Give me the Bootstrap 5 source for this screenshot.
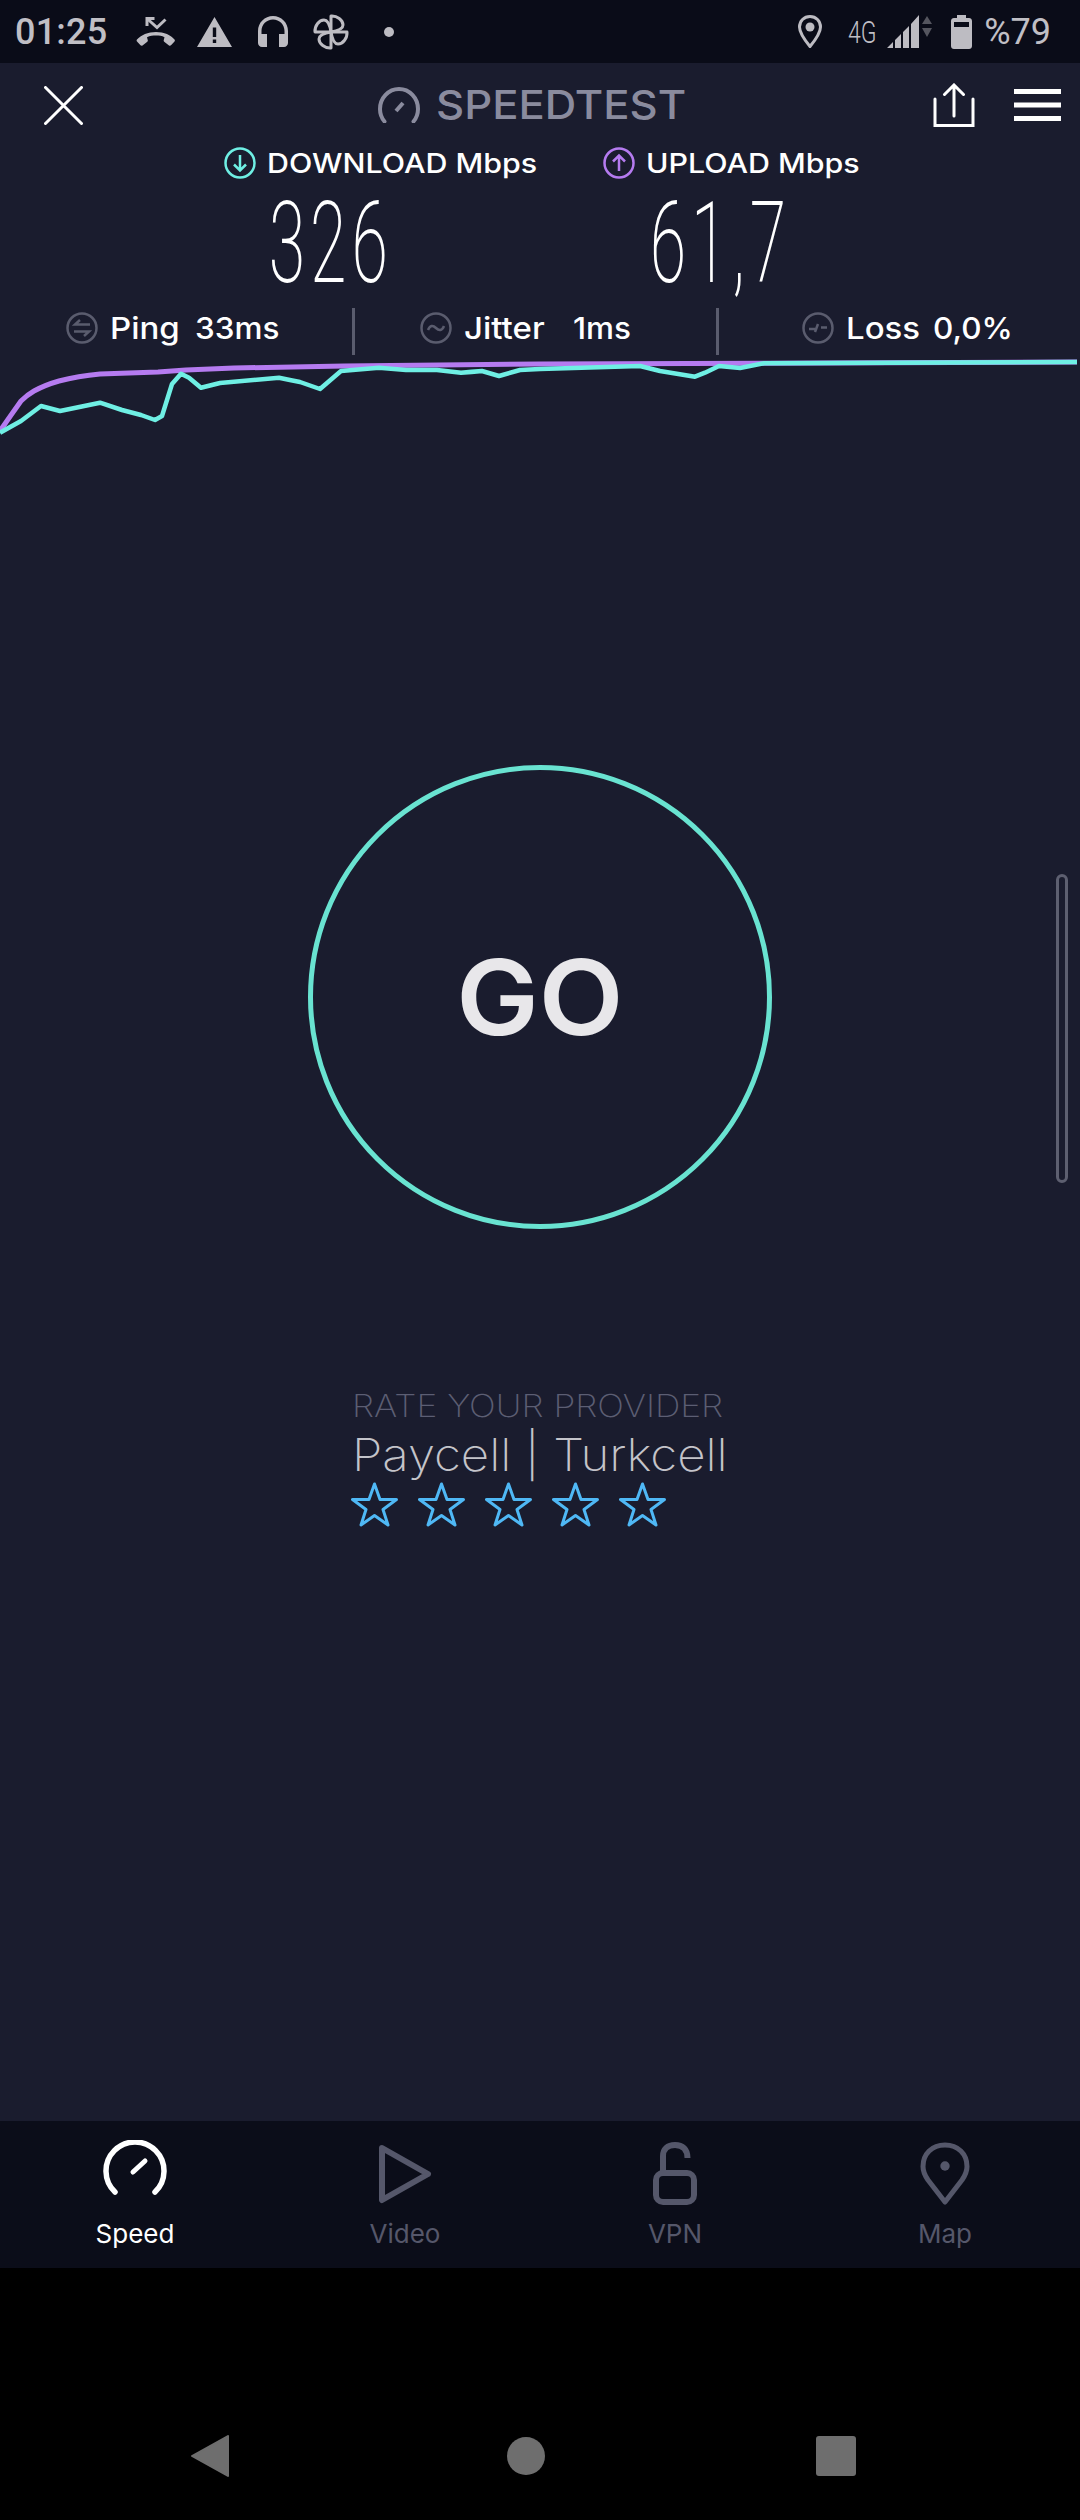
<!DOCTYPE html>
<html lang="en">
<head>
<meta charset="utf-8">
<title>Speedtest</title>
<link href="https://cdn.jsdelivr.net/npm/bootstrap@5.3.0/dist/css/bootstrap.min.css" rel="stylesheet">
<style>
html,body{margin:0;background:#000;}
body{font-family:Inter,"Liberation Sans",sans-serif;color:#fff;}
.phone{width:1080px;height:2520px;overflow:hidden;}
.statusbar{height:63px;background:#0a0c18;color:#c0bfc5;font-family:Roboto,sans-serif;font-size:36px;padding:0 29px 0 15px;}
.statusbar svg{display:block;fill:#bdbcc2;}
.st-time{font-weight:500;line-height:1;width:93px;letter-spacing:.2px;}
.st-4g{font-size:32px;font-weight:300;transform:scaleX(.72);transform-origin:left center;width:32px;line-height:1;}
.st-pct{line-height:1;font-weight:400;}
.appzone{background:#1a1c2e;height:2058px;position:relative;}
.stretched{display:inline-block;transform-origin:left center;}
.headrow{height:80px;padding:4px 19px 0 44px;}
.brand{color:#8a8b9e;font-size:40px;font-weight:500;line-height:1;white-space:nowrap;}
.brand .stretched{transform:scaleX(1.09);}
.speedlabels{padding-left:224px;height:39px;}
.speedlabels .lbl{font-size:27.5px;font-weight:500;line-height:1;padding-top:2px;white-space:nowrap;transform:scaleX(1.105);transform-origin:left center;}
.numrow{height:126px;padding-left:231px;padding-bottom:5px;}
.numval{width:180px;text-align:center;font-family:Roboto,sans-serif;font-weight:200;font-size:114px;line-height:1;letter-spacing:8.5px;transform:scaleX(.58);color:#fff;flex:none;}
.statrow{height:49px;}
.statcell{height:39px;font-size:30px;font-weight:500;line-height:1;white-space:nowrap;}
.stat-k{transform:scaleX(1.1);transform-origin:left center;}
.stat-v{transform:scaleX(1.05);transform-origin:left center;}
.sep{width:3px;height:47px;background:#5a5c6e;flex:none;}
.graphbox{display:block;height:86px;width:1080px;}
.gobox{margin-top:322px;}
.gocircle{width:464px;height:464px;border:5px solid #69e3d1;border-radius:50%;color:#e8e7ea;font-size:104px;font-weight:600;line-height:1;}
.goword{display:inline-block;transform:scaleX(1.06);}
.ratebox{margin-top:158px;padding-left:352px;}
.ratehead{font-size:31.5px;font-weight:200;color:#5c5e73;line-height:38px;white-space:nowrap;}
.ratehead .stretched{transform:scaleX(1.122);}
.ratename{font-size:44.5px;font-weight:200;color:#c4c4ca;line-height:54px;padding-top:3px;white-space:nowrap;}
.ratename .stretched{transform:scaleX(1.105);}
.starrow{gap:20px;margin-left:-1px;}
.scrolltrack{position:absolute;right:12px;top:811px;width:12px;height:309px;border:3px solid #5d5f70;border-radius:6px;}
.tabbar{height:147px;background:#0b0d19;}
.tabitem{width:270px;padding-top:17px;color:#55576a;font-size:26px;line-height:1;}
.tabitem.active{color:#fff;}
.tabicon{height:83px;}
.navbarea{height:252px;background:#000;padding-top:165px;}
</style>
</head>
<body>
<div class="phone d-flex flex-column">
  <div class="statusbar d-flex align-items-center">
    <div class="st-time">01:25</div>
    <svg style="margin-left:28px" width="40" height="30" viewBox="0 0 40 30"><path d="M20 15C12 15 5 18 1 22.500c-.6.700-.5 1.500 0 2l3.500 3.800c.6.600 1.400.700 2 .1l4.800-3.600c.5-.4.7-1 .5-1.600l-.8-3C14 19 17 18.600 20 18.600s6 .4 8.500 1.600l-.8 3c-.2.600 0 1.200.5 1.600l4.800 3.600c.6.600 1.400.5 2-.1l3.500-3.800c.5-.5.600-1.300 0-2C35 18 28 15 20 15z"/><path d="M11 1.500L21 10.500 29.500 2.500" fill="none" stroke="#bdbcc2" stroke-width="3"/><path d="M9.500 0h9v3h-6v6h-3z"/></svg>
    <svg style="margin-left:21px" width="35" height="30" viewBox="0 0 35 30"><path d="M17.500 0L35 30H0zM15.800 10.500v9.500h3.400v-9.500zM15.800 22.500v3.500h3.400v-3.500z" fill-rule="evenodd"/></svg>
    <svg style="margin-left:26px" width="30" height="31" viewBox="0 0 30 31"><path d="M15 0C6.700 0 0 6.700 0 15v12c0 2.200 1.800 4 4 4h5V18H3.500v-3C3.500 8.600 8.600 3.500 15 3.500S26.500 8.600 26.500 15v3H21v13h5c2.200 0 4-1.800 4-4V15C30 6.700 23.300 0 15 0z"/></svg>
    <svg style="margin-left:25px" width="36" height="36" viewBox="0 0 36 36"><g fill="none" stroke="#bdbcc2" stroke-width="3" stroke-linejoin="round"><path d="M18 18V2C24 1.500 30 6 30 11c0 4-6 6-12 7z"/><path d="M18 18H34C34.500 24 30 30 25 30c-4 0-6-6-7-12z"/><path d="M18 18V34C12 34.500 6 30 6 25c0-4 6-6 12-7z"/><path d="M18 18H2C1.500 12 6 6 11 6c4 0 6 6 7 12z"/></g></svg>
    <svg style="margin-left:35px" width="10" height="10" viewBox="0 0 10 10"><circle cx="5" cy="5" r="5"/></svg>
    <div class="ms-auto d-flex align-items-center">
      <svg width="24" height="33" viewBox="0 0 24 33"><path d="M12 1.500C6 1.500 1.500 6 1.500 12c0 6 6 14 10.500 19.500C16.500 26 22.500 18 22.500 12c0-6-4.500-10.500-10.500-10.500z" fill="none" stroke="#bdbcc2" stroke-width="3"/><circle cx="12" cy="12" r="4.500"/></svg>
      <div class="st-4g" style="margin-left:26px">4G</div>
      <svg style="margin-left:7px" width="46" height="33" viewBox="0 0 46 33"><path d="M0 33L6 27V33zM8 25L14 19V33H8zM16 17L22 11V33H16zM24 9L32 0V33H24z"/><path d="M35 9L40 1 45 9zM35 13H45L40 22z" fill="#55565f"/></svg>
      <svg style="margin-left:18px" width="21" height="34" viewBox="0 0 21 34"><path d="M6 0h9v3h3c1.700 0 3 1.300 3 3v25c0 1.700-1.300 3-3 3H3c-1.700 0-3-1.300-3-3V6c0-1.700 1.300-3 3-3h3z"/><rect x="3" y="7" width="15" height="5" fill="#0a0c18"/></svg>
      <div class="st-pct" style="margin-left:12px">%79</div>
    </div>
  </div>

  <div class="appzone">
    <div class="headrow d-flex align-items-center justify-content-between">
      <svg width="39" height="39" viewBox="0 0 39 39"><path d="M1.500 1.500L37.500 37.500M37.500 1.500L1.500 37.500" stroke="#fff" stroke-width="3" stroke-linecap="round"/></svg>
      <div class="brand d-flex align-items-center" style="margin-left:295px">
        <svg class="me-3" width="42" height="36" viewBox="0 0 42 36"><path d="M6.500 34.500C3.500 31 2 26.500 2 22 2 11 10.500 2 21 2s19 9 19 20c0 4.500-1.500 9-4.500 12.500" fill="none" stroke="#8a8b9e" stroke-width="4" stroke-linecap="round"/><path d="M18 24L25 16" stroke="#8a8b9e" stroke-width="4"/></svg>
        <span class="stretched">SPEEDTEST</span>
      </div>
      <div class="d-flex align-items-center ms-auto">
        <svg width="42" height="44" viewBox="0 0 42 44"><path d="M2 16V42.500H40V16M21 33V3M11.500 11.500L21 2l9.500 9.500" fill="none" stroke="#fff" stroke-width="3" stroke-linecap="round"/></svg>
        <svg style="margin-left:39px" width="47" height="32" viewBox="0 0 47 32"><path d="M0 0h47v5H0zM0 13.500h47v5H0zM0 27h47v5H0z" fill="#fff"/></svg>
      </div>
    </div>

    <div class="speedlabels d-flex align-items-center">
      <svg width="32" height="32" viewBox="0 0 32 32"><circle cx="16" cy="16" r="14.500" fill="none" stroke="#6fefe4" stroke-width="2.500"/><path d="M16 8V23M10 17.500L16 23.500l6-6" fill="none" stroke="#6fefe4" stroke-width="2.500"/></svg>
      <span class="lbl" style="margin-left:11px;width:269px">DOWNLOAD Mbps</span>
      <svg style="margin-left:67px" width="32" height="32" viewBox="0 0 32 32"><circle cx="16" cy="16" r="14.500" fill="none" stroke="#b57bf0" stroke-width="2.500"/><path d="M16 24V9M10 14.500L16 8.500l6 6" fill="none" stroke="#b57bf0" stroke-width="2.500"/></svg>
      <span class="lbl" style="margin-left:11px">UPLOAD Mbps</span>
    </div>

    <div class="numrow d-flex align-items-center">
      <div class="numval">326</div>
      <div class="numval" style="margin-left:201px">61,7</div>
    </div>

    <div class="statrow d-flex">
      <div class="statcell d-flex align-items-center" style="width:352px;padding-left:66px">
        <svg width="32" height="32" viewBox="0 0 32 32"><circle cx="16" cy="16" r="14.500" fill="none" stroke="#5a5c6e" stroke-width="2.500"/><path d="M24 12.500H9L14 8M8 19.500H23L18 24" fill="none" stroke="#5a5c6e" stroke-width="2.500"/></svg>
        <span class="stat-k" style="margin-left:12px;width:85px">Ping</span><span class="stat-v">33ms</span>
      </div>
      <div class="sep"></div>
      <div class="statcell d-flex align-items-center" style="width:361px;padding-left:65px">
        <svg width="32" height="32" viewBox="0 0 32 32"><circle cx="16" cy="16" r="14.500" fill="none" stroke="#5a5c6e" stroke-width="2.500"/><path d="M8 18c2-5 5-5 8-2s6 3 8-2" fill="none" stroke="#5a5c6e" stroke-width="2.500"/></svg>
        <span class="stat-k" style="margin-left:12px;width:109px">Jitter</span><span class="stat-v">1ms</span>
      </div>
      <div class="sep"></div>
      <div class="statcell d-flex align-items-center" style="padding-left:83px">
        <svg width="32" height="32" viewBox="0 0 32 32"><circle cx="16" cy="16" r="14.500" fill="none" stroke="#5a5c6e" stroke-width="2.500"/><path d="M7 17h6M13 20l3-8M19 15.500h6" fill="none" stroke="#5a5c6e" stroke-width="2.500"/></svg>
        <span class="stat-k" style="margin-left:12px;width:87px">Loss</span><span class="stat-v">0,0%</span>
      </div>
    </div>

    <svg class="graphbox" viewBox="0 356 1080 86" preserveAspectRatio="none">
      <path d="M0,430 Q11,414 21,400 Q27,394 34,390 Q45,384 59,380 Q78,375 100,373 L158,371 L186,369 L234,367 L344,365 L540,363 L1077,361" fill="none" stroke="#b57bf0" stroke-width="5" stroke-linejoin="round"/>
      <path d="M0,431.700 L21,420 Q31,412.500 41,405 Q50.500,407.500 60,410 Q80,405.900 100,401.700 Q111,405.400 122,409 Q131.500,411.500 141,414 Q148,416.500 155,419 Q158.500,417 162,415 Q167,399 172,383 Q176.500,377.900 181,372.700 Q185,374.700 189,376.700 Q195,381.700 201,386.700 Q210.500,384.400 220,382 Q249.500,379.400 279,376.700 Q289.500,378.900 300,381 Q310,384.500 320,388 Q330.500,379 341,370 Q360,368.400 379,366.700 Q392.500,367.900 406,369 Q421.500,369 437,369 Q449,370.400 461,371.700 Q471.500,370.900 482,370 Q490.500,372.500 499,375 Q509.500,372 520,369 Q530,368.500 540,368 Q590,366.500 640,365 Q650,367.500 660,370 Q677.500,372.900 695,375.700 Q700,373.700 705,371.700 Q712,368.400 719,365 Q729.500,366 740,367 Q752,364.700 764,362.300 Q920,361.700 1077,361" fill="none" stroke="#6fefe4" stroke-width="4.500" stroke-linejoin="round"/>
    </svg>

    <div class="gobox d-flex justify-content-center">
      <div class="gocircle d-flex align-items-center justify-content-center"><span class="goword">GO</span></div>
    </div>

    <div class="ratebox">
      <div class="ratehead"><span class="stretched">RATE YOUR PROVIDER</span></div>
      <div class="ratename"><span class="stretched">Paycell | Turkcell</span></div>
      <div class="starrow d-flex">
        <svg width="47" height="45" viewBox="0 0 47 45"><path d="M23.500 2L29 17.500H45.500L32 27.500 37 43 23.500 33.500 10 43 15 27.500 1.500 17.500H18z" fill="none" stroke="#4fb8f5" stroke-width="3" stroke-linejoin="round"/></svg>
        <svg width="47" height="45" viewBox="0 0 47 45"><path d="M23.500 2L29 17.500H45.500L32 27.500 37 43 23.500 33.500 10 43 15 27.500 1.500 17.500H18z" fill="none" stroke="#4fb8f5" stroke-width="3" stroke-linejoin="round"/></svg>
        <svg width="47" height="45" viewBox="0 0 47 45"><path d="M23.500 2L29 17.500H45.500L32 27.500 37 43 23.500 33.500 10 43 15 27.500 1.500 17.500H18z" fill="none" stroke="#4fb8f5" stroke-width="3" stroke-linejoin="round"/></svg>
        <svg width="47" height="45" viewBox="0 0 47 45"><path d="M23.500 2L29 17.500H45.500L32 27.500 37 43 23.500 33.500 10 43 15 27.500 1.500 17.500H18z" fill="none" stroke="#4fb8f5" stroke-width="3" stroke-linejoin="round"/></svg>
        <svg width="47" height="45" viewBox="0 0 47 45"><path d="M23.500 2L29 17.500H45.500L32 27.500 37 43 23.500 33.500 10 43 15 27.500 1.500 17.500H18z" fill="none" stroke="#4fb8f5" stroke-width="3" stroke-linejoin="round"/></svg>
      </div>
    </div>
    <div class="scrolltrack"></div>
  </div>

  <div class="tabbar d-flex">
    <div class="tabitem active d-flex flex-column align-items-center">
      <div class="tabicon"><svg class="d-block" style="margin-top:2px" width="64" height="56" viewBox="0 0 64 56"><path d="M12 52A29 29 0 1 1 52 52" fill="none" stroke="#fff" stroke-width="5.500" stroke-linecap="round"/><path d="M30 32L42 21" stroke="#fff" stroke-width="5" stroke-linecap="round"/></svg></div>
      <div>Speed</div>
    </div>
    <div class="tabitem d-flex flex-column align-items-center">
      <div class="tabicon"><svg class="d-block" style="margin-top:6px" width="54" height="60" viewBox="0 0 54 60"><path d="M4 4L50 30 4 56z" fill="none" stroke="#55576a" stroke-width="6" stroke-linejoin="round"/></svg></div>
      <div>Video</div>
    </div>
    <div class="tabitem d-flex flex-column align-items-center">
      <div class="tabicon"><svg class="d-block" style="margin-top:4px" width="44" height="63" viewBox="0 0 44 63"><path d="M10 31V14C10 7 14.500 3 22 3s12.500 4 12.500 13" fill="none" stroke="#55576a" stroke-width="6"/><rect x="3" y="31" width="38" height="29" rx="7" fill="none" stroke="#55576a" stroke-width="6"/></svg></div>
      <div>VPN</div>
    </div>
    <div class="tabitem d-flex flex-column align-items-center">
      <div class="tabicon"><svg class="d-block" style="margin-top:4px" width="50" height="63" viewBox="0 0 50 63"><path d="M25 60L8 38C4.500 33 3 29 3 24.500 3 12 12 3 25 3s22 9 22 21.500c0 4.500-1.500 8.500-5 13.500z" fill="none" stroke="#55576a" stroke-width="5" stroke-linejoin="round"/><circle cx="25" cy="24" r="4.700" fill="#55576a"/></svg></div>
      <div>Map</div>
    </div>
  </div>

  <div class="navbarea d-flex align-items-start">
    <svg style="margin-left:191px;margin-top:2px" width="38" height="42" viewBox="0 0 38 42"><path d="M37 1V41L1 21z" fill="#6e6e6e" stroke="#6e6e6e" stroke-width="2" stroke-linejoin="round"/></svg>
    <svg style="margin-left:278px;margin-top:4px" width="38" height="38" viewBox="0 0 38 38"><circle cx="19" cy="19" r="19" fill="#6e6e6e"/></svg>
    <svg style="margin-left:271px;margin-top:3px" width="40" height="40" viewBox="0 0 40 40"><rect width="40" height="40" rx="3" fill="#6e6e6e"/></svg>
  </div>
</div>
<script src="https://cdn.jsdelivr.net/npm/bootstrap@5.3.0/dist/js/bootstrap.bundle.min.js"></script>
</body>
</html>
